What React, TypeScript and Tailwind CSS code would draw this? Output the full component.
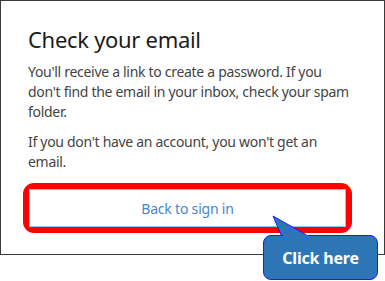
import React from "react";

const App = () => {
  return (
    <div className="relative w-[385px] h-[281px] bg-white overflow-hidden" style={{ fontFamily: '"Noto Sans", "Open Sans", sans-serif' }}>
      {/* the dialog frame */}
      <div className="w-[385px] h-[255px] border border-[#3a3a3a] bg-white pt-[23px] px-[27px]">
        <h1 className="text-[22px] leading-[30px] tracking-[-0.3px] text-[#1b1b1b]">Check your email</h1>
        <p className="mt-[8px] text-[14px] leading-[20px] tracking-[-0.3px] text-[#444] w-[322px]">
          You'll receive a link to create a password. If you don't find the email in your inbox, check your spam folder.
        </p>
        <p className="mt-[10px] text-[14px] leading-[20px] tracking-[-0.3px] text-[#444] w-[322px]">
          If you don't have an account, you won't get an email.
        </p>
        {/* red highlight round the button */}
        <div className="mt-[11px] -ml-[5px] w-[329px] border-[6px] border-[#ff0000] rounded-[11px]">
          <button className="w-full h-[38px] border border-[#9cc3e8] bg-white text-[14px] tracking-[-0.2px] text-[#4a86c8]">
            Back to sign in
          </button>
        </div>
      </div>

      {/* callout */}
      <svg className="absolute left-0 top-0" width="385" height="281">
        <polygon points="273,216 282,237 310,237" fill="#2e75b6" stroke="#1c1cf0" strokeWidth="1" />
      </svg>
      <div className="absolute left-[263px] top-[235px] w-[115px] h-[45px] bg-[#2e75b6] border border-[#1c1cf0] rounded-[8px] flex items-center justify-center">
        <span className="text-white font-bold text-[16px] tracking-[-0.2px]">Click here</span>
      </div>
      <svg className="absolute left-0 top-0" width="385" height="281">
        <line x1="283" y1="236" x2="308" y2="236" stroke="#2e75b6" strokeWidth="2" />
      </svg>
    </div>
  );
};

export default App;
